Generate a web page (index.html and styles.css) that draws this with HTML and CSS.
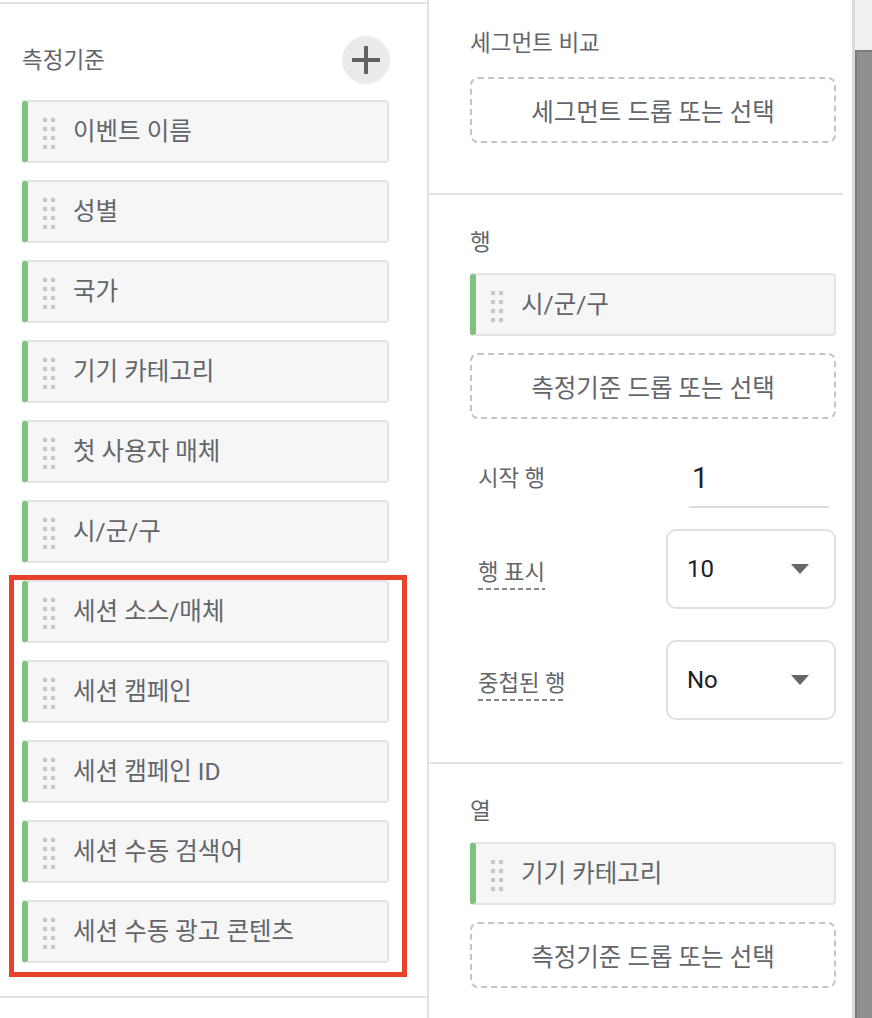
FILE: index.html
```html
<!DOCTYPE html>
<html lang="ko">
<head>
<meta charset="utf-8">
<title>측정기준</title>
<link rel="stylesheet" href="styles.css">
</head>
<body>
<div class="page">
  <aside class="left">
    <div class="left-inner">
      <div class="left-head">
        <span class="label">측정기준</span>
        <button class="add-btn" aria-label="추가">
          <svg width="30" height="30" viewBox="0 0 30 30"><path d="M15 1v28M1 15h28" stroke="#616161" stroke-width="4" fill="none"/></svg>
        </button>
      </div>
      <div class="chip-list">
        <div class="chip"><span class="handle"><i></i><i></i><i></i><i></i><i></i><i></i><i></i><i></i></span><span class="chip-text">이벤트 이름</span></div>
        <div class="chip"><span class="handle"><i></i><i></i><i></i><i></i><i></i><i></i><i></i><i></i></span><span class="chip-text">성별</span></div>
        <div class="chip"><span class="handle"><i></i><i></i><i></i><i></i><i></i><i></i><i></i><i></i></span><span class="chip-text">국가</span></div>
        <div class="chip"><span class="handle"><i></i><i></i><i></i><i></i><i></i><i></i><i></i><i></i></span><span class="chip-text">기기 카테고리</span></div>
        <div class="chip"><span class="handle"><i></i><i></i><i></i><i></i><i></i><i></i><i></i><i></i></span><span class="chip-text">첫 사용자 매체</span></div>
        <div class="chip"><span class="handle"><i></i><i></i><i></i><i></i><i></i><i></i><i></i><i></i></span><span class="chip-text">시/군/구</span></div>
        <div class="chip"><span class="handle"><i></i><i></i><i></i><i></i><i></i><i></i><i></i><i></i></span><span class="chip-text">세션 소스/매체</span></div>
        <div class="chip"><span class="handle"><i></i><i></i><i></i><i></i><i></i><i></i><i></i><i></i></span><span class="chip-text">세션 캠페인</span></div>
        <div class="chip"><span class="handle"><i></i><i></i><i></i><i></i><i></i><i></i><i></i><i></i></span><span class="chip-text">세션 캠페인 ID</span></div>
        <div class="chip"><span class="handle"><i></i><i></i><i></i><i></i><i></i><i></i><i></i><i></i></span><span class="chip-text">세션 수동 검색어</span></div>
        <div class="chip"><span class="handle"><i></i><i></i><i></i><i></i><i></i><i></i><i></i><i></i></span><span class="chip-text">세션 수동 광고 콘텐츠</span></div>
      </div>
    </div>
    <div class="highlight"></div>
  </aside>

  <main class="right">
    <section class="sec sec-first">
      <div class="label">세그먼트 비교</div>
      <div class="drop">세그먼트 드롭 또는 선택</div>
    </section>

    <section class="sec">
      <div class="label">행</div>
      <div class="chip chip-right"><span class="handle"><i></i><i></i><i></i><i></i><i></i><i></i><i></i><i></i></span><span class="chip-text">시/군/구</span></div>
      <div class="drop drop-after">측정기준 드롭 또는 선택</div>

      <div class="form-row row-start">
        <span class="form-label">시작 행</span>
        <div class="num-input">1</div>
      </div>
      <div class="form-row row-show">
        <span class="form-label dotted">행 표시</span>
        <div class="select"><span>10</span><span class="caret"></span></div>
      </div>
      <div class="form-row row-nested">
        <span class="form-label dotted">중첩된 행</span>
        <div class="select"><span>No</span><span class="caret"></span></div>
      </div>
    </section>

    <section class="sec sec-last">
      <div class="label">열</div>
      <div class="chip chip-right"><span class="handle"><i></i><i></i><i></i><i></i><i></i><i></i><i></i><i></i></span><span class="chip-text">기기 카테고리</span></div>
      <div class="drop drop-after">측정기준 드롭 또는 선택</div>
    </section>
  </main>

  <div class="scrollbar"><div class="thumb"></div></div>
</div>
</body>
</html>
```

FILE: styles.css
```css
* { box-sizing: border-box; }
html, body { margin: 0; padding: 0; }
body {
  width: 872px;
  height: 1018px;
  overflow: hidden;
  background: #fff;
  font-family: Roboto, "Noto Sans CJK KR", "Noto Sans", sans-serif;
  color: #62666b;
}
.page {
  display: flex;
  height: 1018px;
  position: relative;
}

/* left panel */
.left {
  width: 429px;
  flex: none;
  border-right: 2px solid #e0e0e0;
  position: relative;
}
.left-inner {
  margin-top: 2px;
  border-top: 2px solid #e2e2e2;
  border-bottom: 2px solid #e2e2e2;
  padding: 32px 38px 33px 22px;
}
.left-head {
  display: flex;
  align-items: center;
  justify-content: space-between;
  height: 48px;
}
.label {
  font-size: 22.5px;
  line-height: 30px;
  color: #62666b;
}
.add-btn {
  width: 48px;
  height: 48px;
  border-radius: 50%;
  border: none;
  background: #ebebeb;
  padding: 0;
  display: flex;
  align-items: center;
  justify-content: center;
  margin-right: -1px;
}
.chip-list {
  margin-top: 16px;
  display: flex;
  flex-direction: column;
  gap: 17px;
}
.chip {
  height: 63px;
  display: flex;
  align-items: center;
  background: #f6f6f6;
  border: 2px solid #e3e3e3;
  border-left: 6px solid #80c07c;
  border-radius: 4px;
  padding-left: 15px;
}
.handle {
  display: grid;
  grid-template-columns: 4px 4px;
  column-gap: 4px;
  row-gap: 5px;
  margin-top: 3px;
}
.handle i {
  display: block;
  width: 4px;
  height: 4px;
  background: #c8c8c8;
}
.chip-text {
  margin-left: 18px;
  font-size: 24.5px;
  line-height: 30px;
  color: #62666b;
  white-space: nowrap;
}
.highlight {
  position: absolute;
  left: 9px;
  top: 575px;
  width: 398px;
  height: 402px;
  border: 5px solid #e8412c;
  pointer-events: none;
}

/* right panel */
.right {
  width: 423px;
  flex: none;
  padding-right: 9px;
}
.sec {
  padding: 32px 7px 42px 41px;
  border-bottom: 2px solid #e2e2e2;
}
.sec-first {
  padding-top: 28px;
  padding-bottom: 50px;
}
.sec-last {
  border-bottom: none;
}
.sec .label + .drop { margin-top: 19px; }
.sec .label + .chip { margin-top: 16px; }
.drop {
  height: 66px;
  border: 2px dashed #c4c4c4;
  border-radius: 8px;
  display: flex;
  align-items: center;
  justify-content: center;
  font-size: 24.5px;
  color: #62666b;
  white-space: nowrap;
}
.drop-after { margin-top: 17px; }

.form-row {
  display: flex;
  align-items: center;
  justify-content: space-between;
  padding-left: 8px;
}
.row-start {
  margin-top: 31px;
  align-items: flex-start;
  padding-right: 7px;
}
.row-start .form-label { line-height: 56px; }
.row-show { margin-top: 21px; }
.row-nested { margin-top: 31px; }
.form-label {
  font-size: 22.3px;
  line-height: 30px;
  color: #62666b;
  white-space: nowrap;
}
.form-label.dotted {
  padding-bottom: 3px;
  background-image: repeating-linear-gradient(to right, #80868b 0 5px, transparent 5px 8px);
  background-size: 100% 2px;
  background-repeat: no-repeat;
  background-position: left bottom;
  margin-top: 8px;
}
.num-input {
  width: 140px;
  height: 58px;
  border-bottom: 2px solid #dcdcdc;
  padding-left: 3px;
  font-size: 29px;
  line-height: 56px;
  color: #202124;
}
.select {
  width: 170px;
  height: 80px;
  border: 2px solid #e0e0e0;
  border-radius: 10px;
  display: flex;
  align-items: center;
  justify-content: space-between;
  padding: 0 25px 0 19px;
  font-size: 24px;
  color: #202124;
}
.caret {
  width: 0;
  height: 0;
  border-left: 9px solid transparent;
  border-right: 9px solid transparent;
  border-top: 10px solid #666;
}

/* scrollbar */
.scrollbar {
  flex: 1;
  border-left: 3px solid #d9d9d9;
  background: #f1f1f1;
  padding-top: 50px;
}
.thumb {
  height: 100%;
  background: #8f8f8f;
  border-left: 2px solid #7b7b7b;
  border-top: 2px solid #7b7b7b;
}
```
